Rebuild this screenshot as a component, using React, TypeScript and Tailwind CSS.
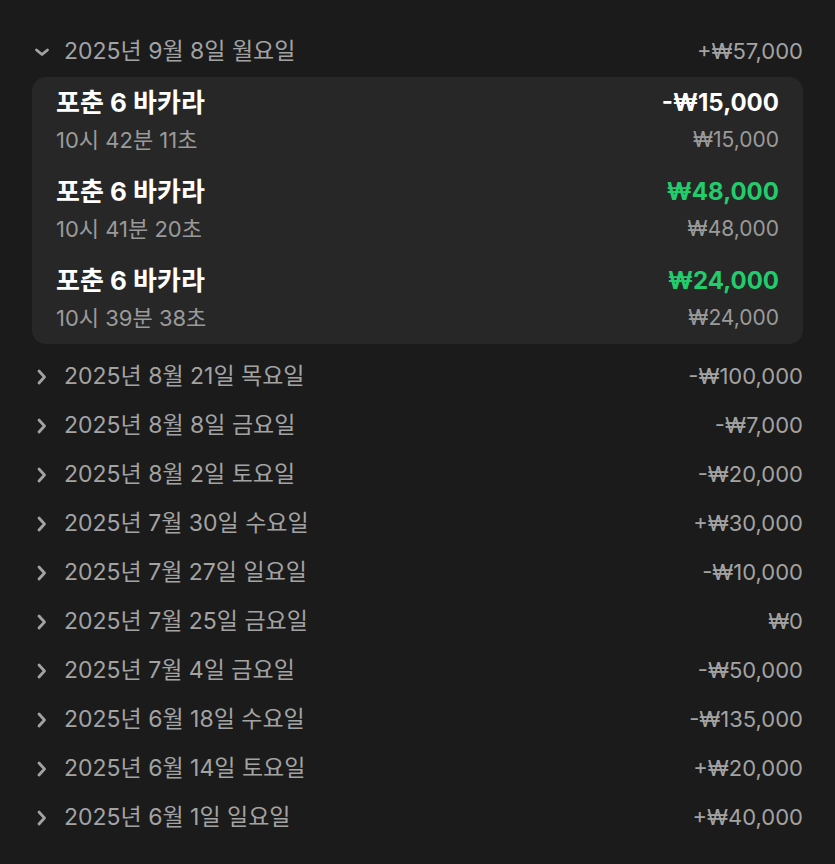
import React from 'react';

interface Bet {
  game: string;
  time: string;
  result: string;
  stake: string;
  win: boolean;
}

interface Day {
  date: string;
  total: string;
  bets?: Bet[];
}

const days: Day[] = [
  {
    date: '2025년 9월 8일 월요일',
    total: '+₩57,000',
    bets: [
      { game: '포춘 6 바카라', time: '10시 42분 11초', result: '-₩15,000', stake: '₩15,000', win: false },
      { game: '포춘 6 바카라', time: '10시 41분 20초', result: '₩48,000', stake: '₩48,000', win: true },
      { game: '포춘 6 바카라', time: '10시 39분 38초', result: '₩24,000', stake: '₩24,000', win: true },
    ],
  },
  { date: '2025년 8월 21일 목요일', total: '-₩100,000' },
  { date: '2025년 8월 8일 금요일', total: '-₩7,000' },
  { date: '2025년 8월 2일 토요일', total: '-₩20,000' },
  { date: '2025년 7월 30일 수요일', total: '+₩30,000' },
  { date: '2025년 7월 27일 일요일', total: '-₩10,000' },
  { date: '2025년 7월 25일 금요일', total: '₩0' },
  { date: '2025년 7월 4일 금요일', total: '-₩50,000' },
  { date: '2025년 6월 18일 수요일', total: '-₩135,000' },
  { date: '2025년 6월 14일 토요일', total: '+₩20,000' },
  { date: '2025년 6월 1일 일요일', total: '+₩40,000' },
];

function Chevron({ open }: { open: boolean }) {
  return (
    <svg
      width="16"
      height="16"
      viewBox="0 0 16 16"
      fill="none"
      stroke="#a3a3a3"
      strokeWidth="2.8"
      strokeLinecap="round"
      strokeLinejoin="round"
      className="shrink-0"
    >
      {open ? <path d="M2.5 6l5.5 4.5L13.5 6" /> : <path d="M5 2l5.5 6L5 14" />}
    </svg>
  );
}

function DayRow({ day }: { day: Day }) {
  const open = !!day.bets;
  return (
    <div>
      <div className="flex h-[49px] items-center justify-between pl-[34px] pr-[32px]">
        <div className="flex items-center gap-[14px]">
          <Chevron open={open} />
          <span className="text-[23px] text-[#a3a3a3]">{day.date}</span>
        </div>
        <span className="text-[22px] text-[#a3a3a3]">{day.total}</span>
      </div>
      {open && (
        <div className="mx-[32px] mt-[1px] mb-[8px] rounded-[14px] bg-[#272727]">
          {day.bets!.map((b, i) => (
            <div key={i} className="flex justify-between px-[24px] pt-[11px] pb-[12px]">
              <div className="flex flex-col gap-[8px]">
                <span className="text-[26px] font-bold leading-[30px] text-white">{b.game}</span>
                <span className="text-[22px] leading-[28px] text-[#9a9a9a]">{b.time}</span>
              </div>
              <div className="flex flex-col items-end gap-[8px]">
                <span
                  className={
                    b.win
                      ? 'text-[24px] font-bold leading-[30px] text-[#22cc6c]'
                      : 'text-[24px] font-bold leading-[30px] text-white'
                  }
                >
                  {b.result}
                </span>
                <span className="text-[21px] leading-[28px] text-[#9a9a9a]">{b.stake}</span>
              </div>
            </div>
          ))}
        </div>
      )}
    </div>
  );
}

export default function App() {
  return (
    <div
      className="min-h-screen bg-[#1b1b1b] pt-[27px]"
      style={{ fontFamily: '"Inter", "Noto Sans CJK KR", sans-serif' }}
    >
      {days.map((d) => (
        <DayRow key={d.date} day={d} />
      ))}
    </div>
  );
}
